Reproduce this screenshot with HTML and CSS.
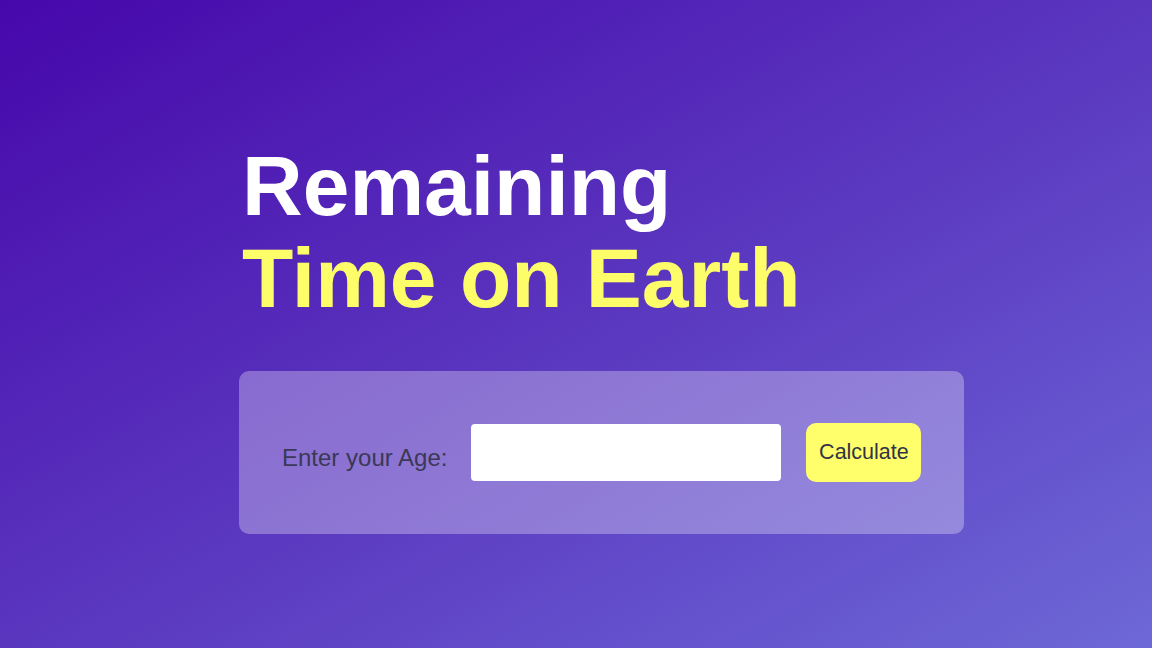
FILE: index.html
```html
<!DOCTYPE html>
<html lang="en">
<head>
<meta charset="utf-8">
<title>Remaining Time on Earth</title>
<link rel="stylesheet" href="styles.css">
</head>
<body>
<main class="page">
  <h1 class="title">
    <span class="title-line">Remaining</span>
    <span class="title-line accent">Time on Earth</span>
  </h1>
  <section class="card">
    <label class="label" for="age">Enter your Age:</label>
    <input class="age-input" id="age" type="text">
    <button class="calc-btn" type="button">Calculate</button>
  </section>
</main>
</body>
</html>
```

FILE: styles.css
```css
* {
  box-sizing: border-box;
}

html, body {
  margin: 0;
  height: 100%;
}

body {
  width: 1152px;
  height: 648px;
  overflow: hidden;
  background: linear-gradient(to bottom right, #4607ab 0%, #5a36bf 50%, #6d68d7 100%);
  font-family: "Liberation Sans", Arial, sans-serif;
}

.page {
  padding: 140px 0 0 239px;
  display: flex;
  flex-direction: column;
}

.title {
  margin: 0 0 47px 3px;
  font-size: 84px;
  line-height: 92px;
  font-weight: 700;
  color: #ffffff;
  display: flex;
  flex-direction: column;
}

.accent {
  color: #fdfd6a;
}

.card {
  width: 725px;
  height: 163px;
  border-radius: 10px;
  background: rgba(255, 255, 255, 0.3);
  display: flex;
  align-items: center;
  padding: 0 40px 0 43px;
}

.label {
  flex: none;
  white-space: nowrap;
  font-size: 24px;
  color: #3a3856;
  margin-right: 24px;
  margin-top: 11px;
}

.age-input {
  flex: none;
  width: 310px;
  height: 57px;
  border: none;
  border-radius: 4px;
  background: #ffffff;
  margin: 0 25px 0 0;
  padding: 0 10px;
  font-size: 20px;
  outline: none;
}

.calc-btn {
  flex: none;
  width: 115px;
  height: 59px;
  border: none;
  border-radius: 10px;
  background: #fffe6b;
  color: #333344;
  font-family: "Liberation Sans", Arial, sans-serif;
  font-size: 21.5px;
  padding: 0;
}
```
